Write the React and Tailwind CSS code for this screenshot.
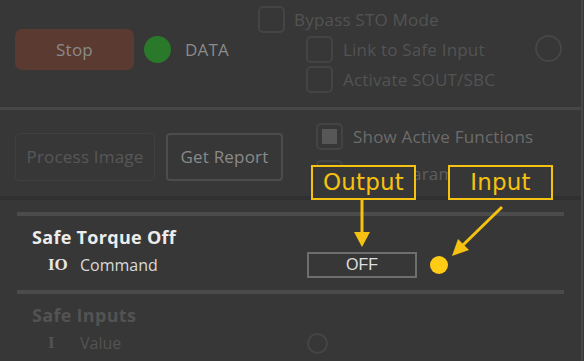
import { useState } from 'react'

function Checkbox({ checked = false, className = '' }) {
  return (
    <div className={`w-[27px] h-[27px] rounded-[5px] border-2 border-[#444444] flex items-center justify-center shrink-0 ${className}`}>
      {checked && <div className="w-[15px] h-[15px] bg-[#575757]" />}
    </div>
  )
}

function Label({ text, className = '' }) {
  return (
    <div className={`absolute h-[35px] border-2 border-[#f5c211] bg-[#373737] flex items-center justify-center font-['DejaVu_Sans',sans-serif] text-[23px] text-[#f5c211] leading-none ${className}`}>
      {text}
    </div>
  )
}

export default function App() {
  const [active] = useState(true)

  return (
    <div className="relative w-[584px] h-[361px] overflow-hidden bg-[#373737] font-['Open_Sans',sans-serif] tracking-[0.2px]">
      <div className="w-[583px] h-full border-r-2 border-[#474747] flex flex-col">
        {/* Top controls */}
        <div className="h-[110px] shrink-0 border-b-[3px] border-[#474747] flex items-start">
          <div className="w-[258px] shrink-0 flex items-center pt-[29px] pl-[15px]">
            <button className="w-[119px] h-[41px] rounded-[7px] bg-[#5b3b31] text-[17px] text-[#8a8a8a]">
              Stop
            </button>
            <div className="ml-[10px] w-[27px] h-[27px] rounded-full bg-[#2a782a]" />
            <span className="ml-[14px] text-[17px] text-[#8a8a8a]">DATA</span>
          </div>
          <div className="pt-[6px] flex flex-col">
            <div className="flex items-center gap-[9px]">
              <Checkbox />
              <span className="text-[17px] leading-[24px] text-[#535353]">Bypass STO Mode</span>
            </div>
            <div className="pl-[48px] mt-[3px] flex flex-col gap-[3px]">
              <div className="flex items-center gap-[10px]">
                <Checkbox />
                <span className="text-[17px] leading-[24px] text-[#535353]">Link to Safe Input</span>
              </div>
              <div className="flex items-center gap-[10px]">
                <Checkbox />
                <span className="text-[17px] leading-[24px] text-[#535353]">Activate SOUT/SBC</span>
              </div>
            </div>
          </div>
          <div className="ml-auto mr-[19px] mt-[35px] w-[27px] h-[27px] rounded-full border-2 border-[#464646]" />
        </div>

        {/* Secondary controls */}
        <div className="h-[90px] shrink-0 border-b-4 border-[#303030] flex items-start">
          <div className="flex gap-[11px] pl-[15px] pt-[23px]">
            <button className="w-[140px] h-[48px] rounded-[4px] border border-[#3f3f3f] text-[17px] text-[#575757]">
              Process Image
            </button>
            <button className="w-[117px] h-[48px] rounded-[4px] border-2 border-[#4c4c4c] text-[17px] text-[#8a8a8a]">
              Get Report
            </button>
          </div>
          <div className="ml-[33px] pt-[13px] flex flex-col gap-[10px]">
            <div className="flex items-center gap-[10px]">
              <Checkbox checked={active} />
              <span className="text-[17px] leading-[24px] text-[#6c6c6c]">Show Active Functions</span>
            </div>
            <div className="flex items-center gap-[10px]">
              <Checkbox />
              <span className="text-[17px] leading-[24px] text-[#5e5e5e]">Show Parameters</span>
            </div>
          </div>
        </div>

        {/* Signals */}
        <div className="flex-1 pt-[12px] tracking-normal">
          <div className="mx-[17px] h-[4px] bg-[#4b4b4b]" />
          <div className="pl-[32px] mt-[10px] h-[22px] leading-[22px] text-[18px] font-bold text-[#ececec] tracking-[0.3px]">
            Safe Torque Off
          </div>
          <div className="mt-[4px] h-[26px] flex items-center">
            <span className="pl-[48px] w-[80px] font-['Liberation_Serif',serif] font-bold text-[17px] text-[#e6e6e6]">IO</span>
            <span className="w-[227px] text-[16px] text-[#dadada]">Command</span>
            <div className="w-[110px] h-[26px] border-2 border-[#6e6e6e] flex items-center justify-center font-['Liberation_Sans',sans-serif] text-[16px] text-[#dedede]">
              OFF
            </div>
            <div className="ml-[13px] w-[18px] h-[18px] rounded-full bg-[#ffcb14]" />
          </div>
          <div className="mx-[17px] mt-[12px] h-[4px] bg-[#4b4b4b]" />
          <div className="pl-[32px] mt-[10px] h-[22px] leading-[22px] text-[18px] font-bold text-[#535353] tracking-[0.3px]">
            Safe Inputs
          </div>
          <div className="mt-[6px] h-[22px] flex items-center">
            <span className="pl-[48px] w-[80px] font-['Liberation_Serif',serif] font-bold text-[17px] text-[#535353]">I</span>
            <span className="w-[227px] text-[16px] text-[#535353]">Value</span>
            <div className="w-[21px] h-[21px] rounded-full border-2 border-[#454545]" />
          </div>
        </div>
      </div>

      {/* Annotations */}
      <Label text="Output" className="left-[311px] top-[165px] w-[105px]" />
      <Label text="Input" className="left-[448px] top-[165px] w-[105px]" />
      <svg className="absolute inset-0 pointer-events-none" width="584" height="361">
        <line x1="362" y1="200" x2="362" y2="236" stroke="#f5c211" strokeWidth="3" />
        <polygon points="354,232 370,232 362,247" fill="#f5c211" />
        <line x1="502" y1="207" x2="462" y2="246" stroke="#f5c211" strokeWidth="3" />
        <polygon points="452,256 458,239 469,250" fill="#f5c211" />
      </svg>
    </div>
  )
}
